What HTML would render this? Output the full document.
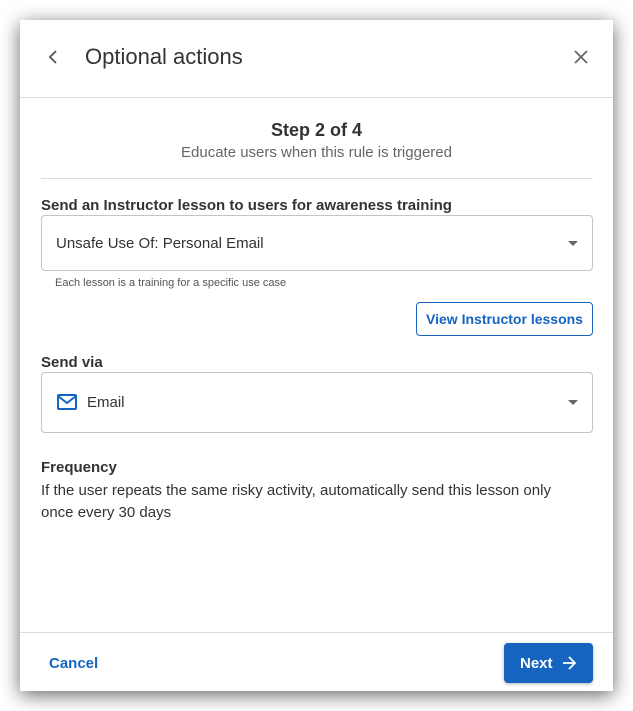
<!DOCTYPE html>
<html><head><style>
body{margin:0;width:633px;height:711px;background:#fff;font-family:"Liberation Sans",sans-serif;position:relative;overflow:hidden}
.dlg{position:absolute;left:20px;top:20px;width:593px;height:671px;background:#fff;box-shadow:0 4px 18px rgba(0,0,0,.6)}
.a{position:absolute;white-space:nowrap}
.hr{position:absolute;height:1px;background:#ddd}
.sel{position:absolute;left:21px;width:550px;border:1px solid #c4c4c4;border-radius:4px}
.caret{position:absolute;right:14px;width:0;height:0;border-left:5px solid transparent;border-right:5px solid transparent;border-top:5px solid #666}
</style></head><body>
<div class="dlg">
 <svg class="a" style="left:27px;top:29px" width="12" height="16" viewBox="0 0 12 16"><path d="M9 2 L3 8 L9 14" fill="none" stroke="#555" stroke-width="1.8"/></svg>
 <div class="a" style="left:65px;top:24px;font-size:22px;color:#333">Optional actions</div>
 <svg class="a" style="left:553px;top:29px" width="16" height="16" viewBox="0 0 16 16"><path d="M2 2L14 14M14 2L2 14" stroke="#666" stroke-width="1.8"/></svg>
 <div class="hr" style="left:0;top:77px;width:593px"></div>
 <div class="a" style="left:0;width:593px;text-align:center;top:100px;font-size:18px;font-weight:bold;color:#333">Step 2 of 4</div>
 <div class="a" style="left:0;width:593px;text-align:center;top:124px;font-size:15px;color:#666">Educate users when this rule is triggered</div>
 <div class="hr" style="left:21px;top:158px;width:552px"></div>
 <div class="a" style="left:21px;top:177px;font-size:15px;font-weight:bold;color:#333">Send an Instructor lesson to users for awareness training</div>
 <div class="sel" style="top:195px;height:54px"><div class="a" style="left:14px;top:19px;font-size:15px;color:#333">Unsafe Use Of: Personal Email</div><div class="caret" style="top:25px"></div></div>
 <div class="a" style="left:35px;top:257px;font-size:11px;color:#555">Each lesson is a training for a specific use case</div>
 <div class="a" style="left:396px;top:282px;width:175px;height:32px;border:1px solid #1565c0;border-radius:4px;color:#1565c0;font-size:14px;font-weight:bold;text-align:center;line-height:33px">View Instructor lessons</div>
 <div class="a" style="left:21px;top:334px;font-size:15px;font-weight:bold;color:#333">Send via</div>
 <div class="sel" style="top:352px;height:59px">
  <svg class="a" style="left:15px;top:21px" width="20" height="16" viewBox="0 0 20 16"><rect x="1" y="1" width="18" height="14" rx="1" fill="none" stroke="#1565c0" stroke-width="2"/><path d="M1 2 L10 9 L19 2" fill="none" stroke="#1565c0" stroke-width="2"/></svg>
  <div class="a" style="left:45px;top:21px;font-size:15px;color:#333">Email</div><div class="caret" style="top:27px"></div></div>
 <div class="a" style="left:21px;top:439px;font-size:15px;font-weight:bold;color:#333">Frequency</div>
 <div class="a" style="left:21px;top:460px;font-size:15px;color:#333;line-height:22px;white-space:normal;width:540px">If the user repeats the same risky activity, automatically send this lesson only once every 30 days</div>
 <div class="hr" style="left:0;top:612px;width:593px"></div>
 <div class="a" style="left:29px;top:635px;font-size:15px;font-weight:bold;color:#1565c0">Cancel</div>
 <div class="a" style="left:484px;top:623px;width:89px;height:40px;background:#1565c0;border-radius:4px;box-shadow:0 1px 3px rgba(0,0,0,.3);color:#fff;font-size:15px;font-weight:bold;line-height:41px"><span style="position:absolute;left:16px">Next</span>
 <svg class="a" style="left:58px;top:13px" width="15" height="14" viewBox="0 0 15 14"><path d="M1 7H13M7 1L13 7L7 13" fill="none" stroke="#fff" stroke-width="1.8"/></svg></div>
</div>
</body></html>
